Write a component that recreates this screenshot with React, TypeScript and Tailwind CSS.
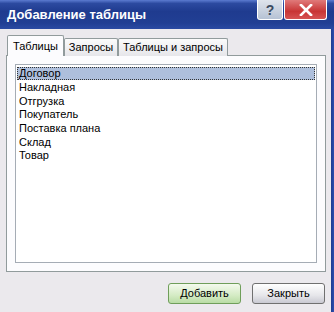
import React from "react";

const items = ["Договор", "Накладная", "Отгрузка", "Покупатель", "Поставка плана", "Склад", "Товар"];
const rowH = ["h-[13px]", "h-[14px]", "h-[14px]", "h-[13px]", "h-[14px]", "h-[14px]", "h-[13px]"];

export default function App() {
  return (
    <div className="w-[334px] h-[312px] bg-[#ebe9ed] flex flex-col overflow-hidden" style={{ fontFamily: "Tahoma, 'Liberation Sans', Arial, sans-serif" }}>
      {/* Title bar */}
      <div className="h-[29px] flex items-start bg-[linear-gradient(to_bottom,#5b7bd0_0%,#2c4aa0_12%,#1f3b8f_40%,#213f94_80%,#2a4aa3_100%)]">
        <div className="flex-1 pl-[7px] pt-[7px] text-white font-bold text-[13px] leading-[16px]" style={{ fontFamily: "'Trebuchet MS', 'Liberation Sans', sans-serif" }}>
          Добавление таблицы
        </div>
        <div className="flex mt-0 mr-[7px]">
          <div className="w-[26px] h-[20px] rounded-b-[3px] border border-t-0 border-white bg-[linear-gradient(to_bottom,#dfe4ec,#b6c2d4)] flex items-center justify-center text-[#3b4a60] text-[14px] font-bold leading-none">?</div>
          <div className="w-[43px] h-[20px] rounded-b-[3px] border border-t-0 border-white bg-[linear-gradient(to_bottom,#e07a7a,#c83535_60%,#d65353)] flex items-center justify-center ml-[1px]">
            <svg width="14" height="12" viewBox="0 0 14 12">
              <path d="M2 1 L12 11 M12 1 L2 11" stroke="#ffffff" strokeWidth="2.6" strokeLinecap="square" />
            </svg>
          </div>
        </div>
      </div>
      {/* Body */}
      <div className="flex-1 flex">
        <div className="flex-1 flex flex-col pl-[6px] pr-[5px] pt-[6px]">
          {/* Tabs */}
          <div className="flex items-end h-[21px] pl-[1px] relative z-10">
            <div className="h-[21px] w-[57px] bg-[#fcfcfe] border border-b-0 border-[#919b9c] rounded-t-[2px] text-[11px] text-black flex items-center justify-center pt-[1px]">Таблицы</div>
            <div className="h-[18px] w-[54px] bg-[linear-gradient(to_bottom,#fbfbfb,#e6e6ea)] border border-b-0 border-[#919b9c] rounded-t-[2px] text-[11px] text-black flex items-center justify-center">Запросы</div>
            <div className="h-[18px] w-[110px] bg-[linear-gradient(to_bottom,#fbfbfb,#e6e6ea)] border border-b-0 border-[#919b9c] rounded-t-[2px] text-[11px] text-black flex items-center justify-center">Таблицы и запросы</div>
          </div>
          {/* Panel */}
          <div className="h-[217px] -mt-[1px] border border-[#919b9c] bg-[#fcfcfe] px-[8px] pt-[8px] pb-[8px] flex">
            <div className="flex-1 border border-[#a5acb5] bg-white pt-[2px] px-[1px]">
              {items.map((t, i) => (
                <div key={t} className={rowH[i] + " flex items-center text-[11px] leading-[13px] text-black pl-[2px] " + (i === 0 ? "bg-[#aebfdc] outline-1 outline-dotted outline-[#333] -outline-offset-1" : "")}>
                  {t}
                </div>
              ))}
            </div>
          </div>
          {/* Buttons */}
          <div className="flex justify-end gap-[11px] mt-[11px] pr-[1px]">
            <div className="w-[73px] h-[21px] rounded-[3px] border border-[#6f9e5a] bg-[linear-gradient(to_bottom,#f4faee,#d4ebc4_60%,#b9dca5)] text-[11px] text-black flex items-center justify-center">Добавить</div>
            <div className="w-[73px] h-[21px] rounded-[3px] border border-[#707070] bg-[linear-gradient(to_bottom,#ffffff,#e6e6ea_60%,#c9c9d2)] text-[11px] text-black flex items-center justify-center">Закрыть</div>
          </div>
        </div>
        <div className="w-[3px] bg-[linear-gradient(to_right,#1f3b8f,#2d4fb0)]" />
      </div>
    </div>
  );
}
